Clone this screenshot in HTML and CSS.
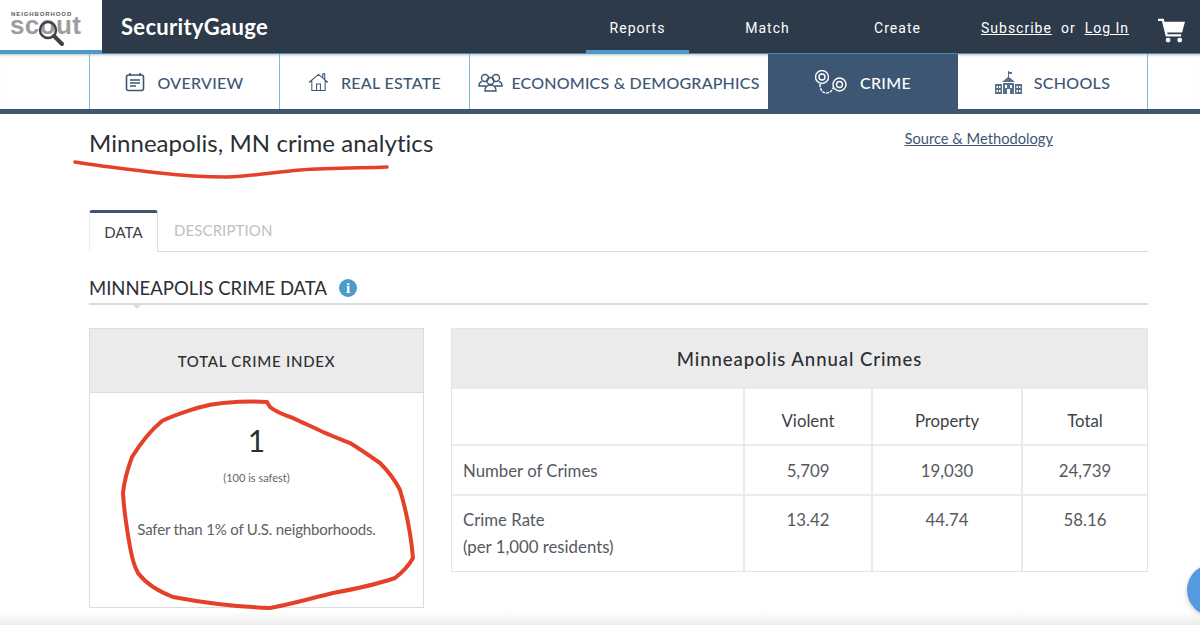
FILE: index.html
```html
<!DOCTYPE html>
<html lang="en">
<head>
  <meta charset="UTF-8" />
  <title>Minneapolis, MN crime analytics</title>
  <link rel="stylesheet" href="styles.css">
</head>
<body>

  <header class="topbar">
    <a class="logo">
      <span class="logo-small">NEIGHBORHOOD</span>
      <span class="logo-big">scout</span>
      <svg class="logo-glass" viewBox="0 0 30 30" fill="none" stroke="#3f4347">
        <circle cx="11" cy="11" r="8" stroke-width="2.500"/>
        <path d="M17 17l8 8" stroke-width="4" stroke-linecap="round"/>
      </svg>
    </a>
    <div class="brand">SecurityGauge</div>
    <nav class="mainnav">
      <a class="active">Reports</a>
      <a>Match</a>
      <a>Create</a>
    </nav>
    <div class="account">
      <a>Subscribe</a><span>or</span><a>Log In</a>
    </div>
    <svg class="cart" viewBox="0 0 28 26">
      <path d="M0 2h5l4 16h15" fill="none" stroke="#fff" stroke-width="2.400"/>
      <path d="M6 4h22l-3 11H9z" fill="#fff"/>
      <circle cx="10.500" cy="23" r="2.500" fill="#fff"/>
      <circle cx="22.500" cy="23" r="2.500" fill="#fff"/>
    </svg>
  </header>

  <div class="subnav">
    <div class="subnav-tabs">
      <a class="subtab">
        <svg class="ico" width="20" height="20" viewBox="0 0 20 20" fill="none" stroke="#3d5674" stroke-width="1.600">
          <rect x="1.500" y="3" width="17" height="15.500" rx="2"/>
          <path d="M5 1v3M15 1v3M5 8h10M5 11h10M5 14h6"/>
        </svg>
        OVERVIEW
      </a>
      <a class="subtab">
        <svg class="ico" width="21" height="20" viewBox="0 0 22 20" fill="none" stroke="#3d5674" stroke-width="1.100">
          <path d="M1 10.500L11 2l10 8.500M4 8.500V19h14V8.500M9 19v-7h4v7M15.500 5V1.500h2v5.300"/>
        </svg>
        REAL ESTATE
      </a>
      <a class="subtab econ">
        <svg class="ico" width="25" height="20" viewBox="0 0 25 20" fill="none" stroke="#3d5674" stroke-width="1.400">
          <circle cx="7" cy="6" r="3.500"/><circle cx="18" cy="6" r="3.500"/>
          <circle cx="12.500" cy="9" r="3.500"/>
          <path d="M4 9.500C2 10 1 12 1 14h7M21 9.500c2 .5 3 2.500 3 4.500h-7M7 19c0-4 2-6 5.500-6s5.500 2 5.500 6z"/>
        </svg>
        ECONOMICS &amp; DEMOGRAPHICS
      </a>
      <a class="subtab current">
        <svg class="ico" width="32" height="25" viewBox="0 0 32 25" fill="none" stroke="#fff" stroke-width="1.400">
          <circle cx="7" cy="7" r="6.500"/><circle cx="7" cy="7" r="3"/>
          <circle cx="24.500" cy="14.500" r="6.500"/><circle cx="24.500" cy="14.500" r="3"/>
          <path d="M5 14c0 5 2 9 6 9s6-2 7.500-6" stroke-dasharray="3 1"/>
        </svg>
        CRIME
      </a>
      <a class="subtab">
        <svg class="ico" width="27" height="23" viewBox="0 0 27 23" fill="#5a6f88">
          <path d="M13 0h1v1h3v2h-3v3l6 5H7l6-5z"/>
          <path d="M0 13h7v10H0zM20 13h7v10h-7zM8 12h11v11H8z"/>
          <path d="M1.500 15h1.500v2H1.500zM4 15h1.500v2H4zM1.500 19h1.500v2H1.500zM4 19h1.500v2H4zM21.500 15H23v2h-1.500zM24 15h1.500v2H24zM21.500 19H23v2h-1.500zM24 19h1.500v2H24zM10 14h2v3h-2zM15 14h2v3h-2zM12 18h3v5h-3z" fill="#fff"/>
        </svg>
        SCHOOLS
      </a>
    </div>
  </div>

  <main class="content">
    <div class="title-row">
      <h1>Minneapolis, MN crime analytics</h1>
      <a class="source">Source &amp; Methodology</a>
    </div>

    <div class="tabs">
      <a class="tab active">DATA</a>
      <a class="tab">DESCRIPTION</a>
    </div>

    <div class="section-head">
      <h2>MINNEAPOLIS CRIME DATA</h2>
      <span class="info">i</span>
    </div>

    <div class="panels">
      <section class="index-card">
        <div class="index-head">TOTAL CRIME INDEX</div>
        <div class="index-body">
          <div class="index-num">1</div>
          <div class="index-note">(100 is safest)</div>
          <div class="index-text">Safer than 1% of U.S. neighborhoods.</div>
        </div>
      </section>

      <section class="annual">
        <div class="annual-head">Minneapolis Annual Crimes</div>
        <table>
          <tr class="row-head">
            <td></td>
            <th>Violent</th>
            <th>Property</th>
            <th>Total</th>
          </tr>
          <tr class="row-num">
            <td>Number of Crimes</td>
            <td class="val">5,709</td>
            <td class="val">19,030</td>
            <td class="val">24,739</td>
          </tr>
          <tr class="row-rate">
            <td>Crime Rate<br>(per 1,000 residents)</td>
            <td class="val">13.42</td>
            <td class="val">44.74</td>
            <td class="val">58.16</td>
          </tr>
        </table>
      </section>
    </div>
  </main>

  <!-- pen marks drawn over the screenshot -->
  <svg class="marks" width="1200" height="625" viewBox="0 0 1200 625" fill="none" stroke="#e5402a" stroke-linecap="round" stroke-linejoin="round">
    <path stroke-width="3.500" d="M75 162C105 167 135 170 160 173C185 176 205 177 227 177C255 176 275 172 300 170C330 168 360 168 387 167"/>
    <path stroke-width="4" d="M267 402C250 401 235 402 223 403C212 404 204 406 197 408C185 412 172 416 162 421C150 431 140 444 132 457C128 468 124 482 123 493C124 512 127 530 130 547C132 558 134 566 138 573C147 585 160 592 173 597C205 603 240 607 270 608C292 604 312 598 333 593C355 589 375 585 395 578C403 572 409 565 413 558C411 535 406 510 400 490C395 480 388 471 380 463C370 456 360 449 350 443C340 439 332 436 323 432C313 427 303 423 293 418C284 415 276 412 270 407L267 402"/>
  </svg>

  <div class="chat-bubble"></div>
  <div class="bottom-fade"></div>

</body>
</html>
```

FILE: styles.css
```css
html, body {
  height: 100%;
}

body {
  margin: 0;
  font-family: 'Lato', sans-serif;
  background-color: white;
  color: #2b2f33;
  overflow: hidden;
  position: relative;
}

a {
  text-decoration: none;
  color: inherit;
}

/* top bar */

.topbar {
  background-color: #2d3a49;
  color: white;
  height: 54px;
  display: flex;
  align-items: center;
  box-sizing: border-box;
  border-bottom: 1px solid #4f88a8;
}

.logo {
  width: 102px;
  height: 54px;
  flex-shrink: 0;
  background-color: white;
  box-sizing: border-box;
  border-bottom: 4px solid #4c9bc9;
  position: relative;
  overflow: hidden;
  display: block;
}

.logo-small {
  position: absolute;
  left: 11px;
  top: 11px;
  font-family: 'Liberation Sans', sans-serif;
  font-size: 6px;
  line-height: 6px;
  font-weight: bold;
  letter-spacing: 0.9px;
  color: #55595d;
}

.logo-big {
  position: absolute;
  left: 10px;
  top: 17px;
  font-family: 'Liberation Sans', sans-serif;
  font-size: 26px;
  line-height: 17px;
  font-weight: bold;
  letter-spacing: 0.4px;
  color: #9b9da0;
}

.logo-glass {
  position: absolute;
  left: 37px;
  top: 19px;
  width: 30px;
  height: 30px;
}

.brand {
  margin-left: 19px;
  font-size: 22px;
  font-weight: 700;
  letter-spacing: 0.3px;
  width: 465px;
  flex-shrink: 0;
}

.mainnav {
  display: flex;
  height: 100%;
}

.mainnav a {
  font-family: 'Roboto', sans-serif;
  font-size: 14px;
  font-weight: 400;
  letter-spacing: 1px;
  width: 103px;
  margin-right: 27px;
  text-align: center;
  line-height: 56px;
  box-sizing: border-box;
  height: 54px;
}

.mainnav a.active {
  border-bottom: 4px solid #4c9bc9;
}

.account {
  font-family: 'Roboto', sans-serif;
  font-size: 14px;
  font-weight: 400;
  letter-spacing: 1px;
  margin-left: 5px;
  display: flex;
  gap: 9px;
  padding-top: 2px;
  white-space: nowrap;
}

.account a {
  text-decoration: underline;
}

.cart {
  width: 27px;
  height: 25px;
  position: absolute;
  left: 1158px;
  top: 18px;
}

/* report sections */

.subnav {
  height: 60px;
  box-sizing: border-box;
  border-bottom: 5px solid #3d5674;
  box-shadow: inset 0 3px 3px -2px rgba(0,0,0,0.25);
}

.subnav-tabs {
  margin-left: 89px;
  width: 1059px;
  height: 55px;
  display: flex;
}

.subtab {
  width: 190px;
  display: flex;
  align-items: center;
  justify-content: center;
  gap: 12px;
  padding-top: 1px;
  font-size: 16px;
  font-weight: 500;
  letter-spacing: 0.3px;
  color: #3d5674;
  box-sizing: border-box;
  border-left: 1px solid #7fb9d6;
}

.subtab:last-child {
  border-right: 1px solid #7fb9d6;
}

.subtab.econ {
  width: 299px;
  gap: 8px;
  letter-spacing: 0.2px;
}

.subtab.current {
  background-color: #3d5674;
  color: white;
  border-left: none;
  gap: 13px;
}

.subtab.current + .subtab {
  border-left: none;
}

/* main area */

.content {
  padding: 0 52px 0 89px;
}

.title-row {
  display: flex;
  justify-content: space-between;
  height: 96px;
}

h1 {
  margin: 14px 0 0;
  font-size: 24px;
  font-weight: 400;
  letter-spacing: 0.06px;
  line-height: 30px;
}

.source {
  margin: 14px 95px 0 0;
  font-size: 14.7px;
  line-height: 20px;
  color: #3d5674;
  text-decoration: underline;
}

.tabs {
  display: flex;
  height: 42px;
  box-sizing: border-box;
  border-bottom: 1px solid #dcdcdc;
}

.tab {
  font-size: 15px;
  color: #c0c0c0;
  padding: 11px 0 0 16px;
  letter-spacing: 0.1px;
}

.tab.active {
  width: 69px;
  margin-bottom: -1px;
  padding: 10px 0 0;
  box-sizing: border-box;
  text-align: center;
  color: #3c4248;
  background: white;
  border-top: 3px solid #3d5674;
  border-left: 1px solid #eee;
  border-right: 1px solid #dcdcdc;
  border-radius: 3px 3px 0 0;
}

.section-head {
  display: flex;
  align-items: flex-end;
  gap: 12px;
  height: 53px;
  padding-bottom: 3px;
  box-sizing: border-box;
  border-bottom: 2px solid #dcdcdc;
  position: relative;
}

.section-head::after {
  content: "";
  position: absolute;
  left: 44px;
  top: 53px;
  border: 4px solid transparent;
  border-top-color: #dcdcdc;
}

h2 {
  margin: 0;
  font-size: 18.5px;
  line-height: 24px;
  font-weight: 400;
  letter-spacing: 0;
}

.info {
  width: 18px;
  height: 18px;
  margin-bottom: 3px;
  border-radius: 50%;
  background-color: #4c9bc9;
  color: white;
  font-family: 'Liberation Serif', serif;
  font-size: 15px;
  font-weight: bold;
  line-height: 18px;
  text-align: center;
}

.panels {
  margin-top: 23px;
  display: flex;
  gap: 27px;
  align-items: flex-start;
}

.index-card {
  width: 335px;
  height: 280px;
  box-sizing: border-box;
  border: 1px solid #dcdcdc;
}

.index-head {
  height: 64px;
  background-color: #ebebeb;
  border-bottom: 1px solid #dcdcdc;
  box-sizing: border-box;
  text-align: center;
  line-height: 64px;
  font-size: 15px;
  font-weight: 500;
  letter-spacing: 0.75px;
}

.index-body {
  text-align: center;
}

.index-num {
  margin-top: 29px;
  font-size: 30px;
  line-height: 36px;
}

.index-note {
  margin-top: 13px;
  font-size: 11px;
  line-height: 14px;
  color: #666;
}

.index-text {
  margin-top: 34px;
  font-size: 15px;
  line-height: 20px;
  letter-spacing: -0.17px;
  color: #5c6166;
}

.annual {
  width: 697px;
  box-sizing: border-box;
  border: 1px solid #e4e4e4;
}

.annual-head {
  height: 58px;
  background-color: #ebebeb;
  text-align: center;
  line-height: 60px;
  font-size: 18.5px;
  font-weight: 500;
  letter-spacing: 0.95px;
}

table {
  width: 100%;
  table-layout: fixed;
  border-collapse: collapse;
  font-size: 16.8px;
  color: #55595e;
}

td, th {
  border-left: 2px solid #ebebeb;
  border-top: 2px solid #ebebeb;
  padding: 0;
  font-weight: 400;
  text-align: center;
}

td:first-child {
  width: 292px;
  border-left: none;
  text-align: left;
  padding-left: 11px;
  box-sizing: border-box;
}

th {
  color: #3c4248;
  padding-top: 8px;
}

th:nth-child(2) {
  width: 126px;
}

th:nth-child(3) {
  width: 148px;
}

.row-head {
  height: 57px;
}

.row-num {
  height: 50px;
}

.row-rate {
  height: 76px;
}

.row-rate td {
  vertical-align: top;
  padding-top: 10px;
  line-height: 27px;
}

.row-rate td.val {
  padding-top: 12px;
  line-height: 24px;
}

/* things on top */

.marks {
  position: absolute;
  left: 0;
  top: 0;
  pointer-events: none;
}

.chat-bubble {
  position: absolute;
  left: 1187px;
  top: 564px;
  width: 52px;
  height: 52px;
  border-radius: 50%;
  background-color: #5599de;
  box-shadow: 0 2px 5px rgba(0,0,0,0.2);
}

.bottom-fade {
  position: absolute;
  left: 0;
  right: 0;
  bottom: 0;
  height: 14px;
  background: linear-gradient(rgba(235,235,235,0), rgba(235,235,235,0.9));
}
```
